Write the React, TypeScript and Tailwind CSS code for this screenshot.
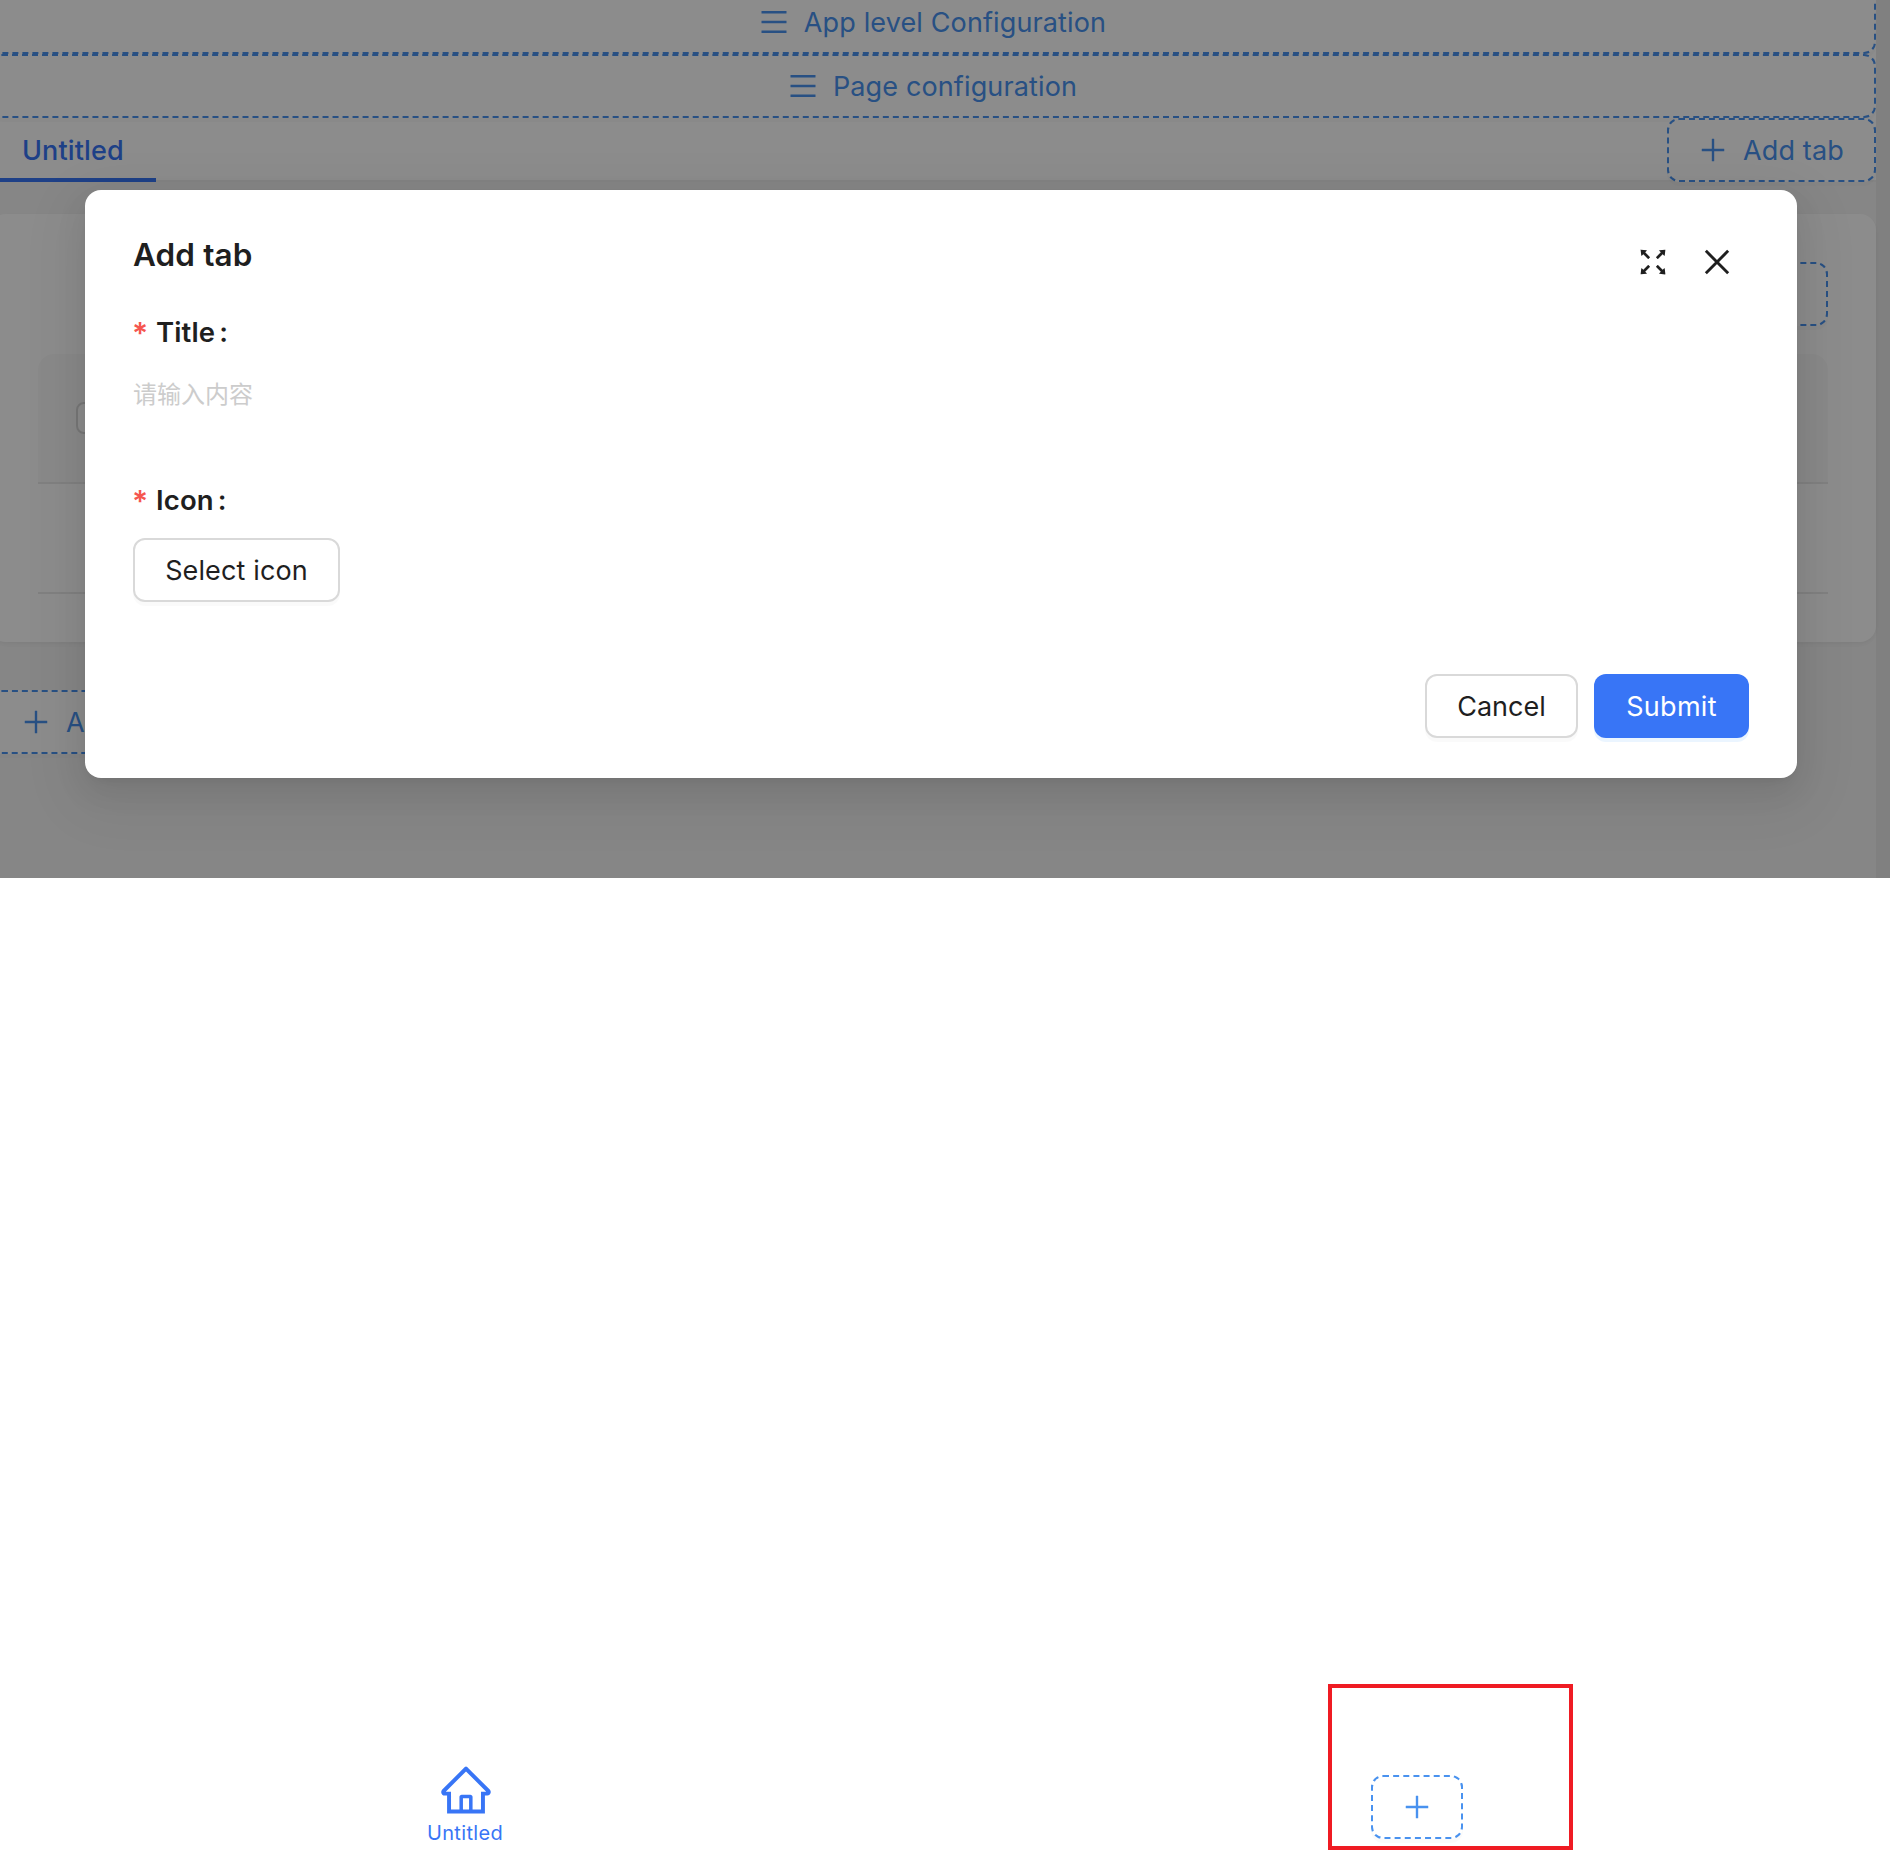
import type { ReactNode } from 'react';
import {
  AiOutlineFullscreen,
  AiOutlineHome,
  AiOutlineMenu,
  AiOutlinePlus,
} from 'react-icons/ai';

function CloseIcon({ className }: { className: string }) {
  return (
    <svg viewBox="0 0 1024 1024" fill="none" stroke="currentColor" strokeWidth="82" className={className}>
      <path d="M195 195L829 829M829 195L195 829" />
    </svg>
  );
}

function DashedButton({
  className,
  icon,
  label,
}: {
  className: string;
  icon?: ReactNode;
  label?: string;
}) {
  return (
    <button
      className={`flex h-16 items-center justify-center rounded-xl border-2 border-dashed border-[#4992ef] bg-white whitespace-nowrap text-[#4992ef] shadow-[0_4px_0_rgba(0,0,0,0.02)] ${className}`}
    >
      {icon}
      {label && <span className="mr-[2px] ml-[14px] pt-[2px]">{label}</span>}
    </button>
  );
}

function FieldLabel({ text }: { text: string }) {
  return (
    <div className="flex h-11 items-center pt-[2px] text-[27.5px] font-semibold">
      <span className="mr-[9px] -ml-px w-[14px] text-[30px] text-[#f5564f]">*</span>
      <span className="ml-px">{text}</span>
      <span className="ml-1">:</span>
    </div>
  );
}

function AddTabDialog() {
  return (
    <div className="absolute top-[190px] left-[85px] flex h-[588px] w-[1712px] flex-col rounded-2xl bg-white px-12 pt-10 text-[#1f1f1f] shadow-[0_12px_32px_rgba(0,0,0,0.08),0_6px_12px_-8px_rgba(0,0,0,0.12),0_18px_56px_16px_rgba(0,0,0,0.05)]">
      <div className="flex h-12 justify-between">
        <h2 className="text-[31.5px] leading-[50px] font-semibold">Add tab</h2>
        <div className="mt-[14px] mr-[14px] flex gap-7">
          <AiOutlineFullscreen className="size-9" />
          <CloseIcon className="size-9" />
        </div>
      </div>
      <div className="mt-8">
        <FieldLabel text="Title" />
        <input
          className="mt-4 block h-12 w-full text-2xl tracking-normal outline-none placeholder:text-[#cccccc]"
          placeholder="请输入内容"
        />
      </div>
      <div className="mt-[60px]">
        <FieldLabel text="Icon" />
        <button className="mt-4 h-16 w-[207px] rounded-xl border-2 border-[#d9d9d9] bg-white pt-[2px] shadow-[0_4px_0_rgba(0,0,0,0.02)]">
          Select icon
        </button>
      </div>
      <div className="mt-[72px] flex justify-end gap-4">
        <button className="h-16 w-[153px] rounded-xl border-2 border-[#d9d9d9] bg-white pt-[2px] tracking-normal shadow-[0_4px_0_rgba(0,0,0,0.02)]">
          Cancel
        </button>
        <button className="h-16 w-[155px] rounded-xl bg-[#3875f6] pt-[2px] tracking-[0.3px] text-white shadow-[0_4px_0_#ebf5ff]">
          Submit
        </button>
      </div>
    </div>
  );
}

function DesignerPage() {
  return (
    <div className="flex h-[878px] bg-[#eaeaea]">
      <main className="-ml-[10px] w-[1886px] bg-[#f5f5f5]">
        <div className="-mt-[10px] bg-white">
          <DashedButton
            className="w-full"
            icon={<AiOutlineMenu className="size-8" />}
            label="App level Configuration"
          />
          <DashedButton
            className="w-full"
            icon={<AiOutlineMenu className="size-8" />}
            label="Page configuration"
          />
          <div className="flex h-16 justify-between border-b-2 border-[#efefef]">
            <div className="h-16 w-[166px] border-b-4 border-[#3875f6] pl-8 leading-[66px] font-medium text-[#3875f6]">
              Untitled
            </div>
            <DashedButton
              className="w-[209px]"
              icon={<AiOutlinePlus className="size-8" />}
              label="Add tab"
            />
          </div>
        </div>
        <section className="mt-8 h-[428px] rounded-2xl bg-white px-12 pt-12 shadow-[0_2px_4px_rgba(0,0,0,0.03),0_2px_12px_-2px_rgba(0,0,0,0.02),0_4px_8px_rgba(0,0,0,0.02)]">
          <div className="flex justify-end">
            <DashedButton className="w-[209px]" />
          </div>
          <div className="mt-7">
            <div className="flex h-[130px] items-center rounded-t-2xl border-b-2 border-[#eaeaea] bg-[#fafafa] pl-[38px]">
              <span className="size-8 rounded-lg border-2 border-[#d9d9d9] bg-white" />
            </div>
            <div className="h-[110px] border-b-2 border-[#eaeaea]" />
          </div>
        </section>
        <DashedButton
          className="mt-12 w-[238px]"
          icon={<AiOutlinePlus className="size-8" />}
          label="Add block"
        />
      </main>
    </div>
  );
}

export default function App() {
  return (
    <div className="relative flex h-[1850px] w-[1890px] flex-col overflow-hidden bg-white font-['Inter','Noto_Sans_CJK_SC',sans-serif] text-[27px] tracking-[0.13px]">
      <DesignerPage />
      <div className="absolute inset-x-0 top-0 h-[878px] overflow-hidden bg-black/45">
        <AddTabDialog />
      </div>
      <nav className="mt-auto flex h-[90px] w-full">
        <div className="flex w-[932px] flex-col items-center pt-[2px] text-[#3875f6]">
          <AiOutlineHome className="size-14" />
          <span className="mr-[2px] text-xl leading-[30px] tracking-[0.35px]">Untitled</span>
        </div>
        <div className="flex flex-1 pt-[15px] pl-[439px]">
          <DashedButton className="w-[92px]" icon={<AiOutlinePlus className="size-8" />} />
        </div>
      </nav>
      <div className="absolute top-[1684px] left-[1328px] h-[166px] w-[245px] border-4 border-[#ef1b23]" />
    </div>
  );
}
